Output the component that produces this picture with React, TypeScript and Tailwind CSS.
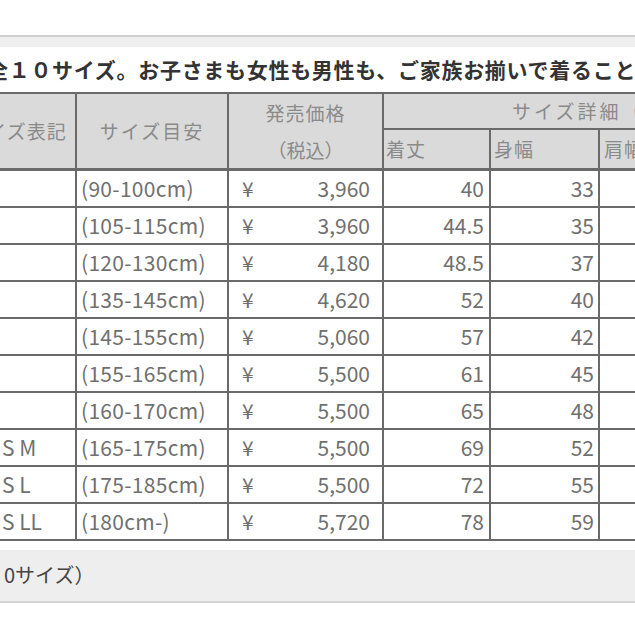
import React from "react";

const rows: { label: string; range: string; price: string; len: string; wid: string }[] = [
  { label: "", range: "(90-100cm)", price: "3,960", len: "40", wid: "33" },
  { label: "", range: "(105-115cm)", price: "3,960", len: "44.5", wid: "35" },
  { label: "", range: "(120-130cm)", price: "4,180", len: "48.5", wid: "37" },
  { label: "", range: "(135-145cm)", price: "4,620", len: "52", wid: "40" },
  { label: "", range: "(145-155cm)", price: "5,060", len: "57", wid: "42" },
  { label: "", range: "(155-165cm)", price: "5,500", len: "61", wid: "45" },
  { label: "", range: "(160-170cm)", price: "5,500", len: "65", wid: "48" },
  { label: "S M", range: "(165-175cm)", price: "5,500", len: "69", wid: "52" },
  { label: "S L", range: "(175-185cm)", price: "5,500", len: "72", wid: "55" },
  { label: "S LL", range: "(180cm-)", price: "5,720", len: "78", wid: "59" },
];

const font = { fontFamily: '"Noto Sans CJK JP", "Noto Sans", sans-serif' };

export default function App() {
  return (
    <div className="w-[635px] h-[635px] overflow-hidden bg-white" style={font}>
      <div className="h-[35px] bg-white" />
      <div className="h-[12px] border-t-2 border-[#cfcfcf] bg-[#efefef]" />
      <div className="h-[45px] bg-white flex items-center overflow-hidden whitespace-nowrap">
        <span className="-ml-[13px] text-[21px] font-bold text-[#333] tracking-[0.7px]">
          全１０サイズ。お子さまも女性も男性も、ご家族お揃いで着ることができます
        </span>
      </div>
      <div className="overflow-hidden">
        <table className="-ml-[43px] table-fixed border-collapse w-[960px] text-[#707070]">
          <colgroup>
            <col className="w-[118px]" />
            <col className="w-[152px]" />
            <col className="w-[155px]" />
            <col className="w-[107px]" />
            <col className="w-[109px]" />
            <col className="w-[109px]" />
            <col className="w-[210px]" />
          </colgroup>
          <thead className="bg-[#dadada] text-[#8a8a8a] text-[19px]">
            <tr className="h-[33px]">
              <th rowSpan={2} className="border-2 border-b-[3px] border-[#6a6a6a] font-normal tracking-[1px] text-center">
                サイズ表記
              </th>
              <th rowSpan={2} className="border-2 border-b-[3px] border-[#6a6a6a] font-normal tracking-[2px] text-center">
                サイズ目安
              </th>
              <th rowSpan={2} className="border-2 border-b-[3px] border-[#6a6a6a] font-normal text-center leading-[37px]">
                <div className="tracking-[1px]">発売価格</div>
                <div>（税込）</div>
              </th>
              <th colSpan={4} className="border-2 border-[#6a6a6a] font-normal text-left pl-[128px] tracking-[3px]">
                サイズ詳細（cm）
              </th>
            </tr>
            <tr className="h-[38px]">
              <th className="border-2 border-b-[3px] border-[#6a6a6a] font-normal text-left pl-[2px] tracking-[1px]">着丈</th>
              <th className="border-2 border-b-[3px] border-[#6a6a6a] font-normal text-left pl-[3px] tracking-[1px]">身幅</th>
              <th className="border-2 border-b-[3px] border-[#6a6a6a] font-normal text-left pl-[4px] tracking-[1px]">肩幅</th>
              <th className="border-2 border-b-[3px] border-[#6a6a6a] font-normal text-left pl-[4px]">袖丈</th>
            </tr>
          </thead>
          <tbody className="text-[21px]">
            {rows.map((r, i) => (
              <tr key={i} className="h-[37px]">
                <td className="border-2 border-[#6a6a6a] pl-[43px] text-left whitespace-nowrap leading-none">{r.label}</td>
                <td className="border-2 border-[#6a6a6a] pl-[4px] text-left whitespace-nowrap leading-none tracking-[0.3px]">{r.range}</td>
                <td className="border-2 border-[#6a6a6a] leading-none">
                  <div className="flex justify-between pl-[13px] pr-[12px]">
                    <span>¥</span>
                    <span>{r.price}</span>
                  </div>
                </td>
                <td className="border-2 border-[#6a6a6a] text-right pr-[5px] leading-none">{r.len}</td>
                <td className="border-2 border-[#6a6a6a] text-right pr-[4px] leading-none">{r.wid}</td>
                <td className="border-2 border-[#6a6a6a]"></td>
                <td className="border-2 border-[#6a6a6a]"></td>
              </tr>
            ))}
          </tbody>
        </table>
      </div>
      <div className="h-[9px] bg-white" />
      <div className="h-[53px] bg-[#eeeeee] border-b-2 border-[#d4d4d4] flex items-center overflow-hidden whitespace-nowrap">
        <span className="pl-[4px] text-[20px] text-[#444]">0サイズ）</span>
      </div>
    </div>
  );
}
